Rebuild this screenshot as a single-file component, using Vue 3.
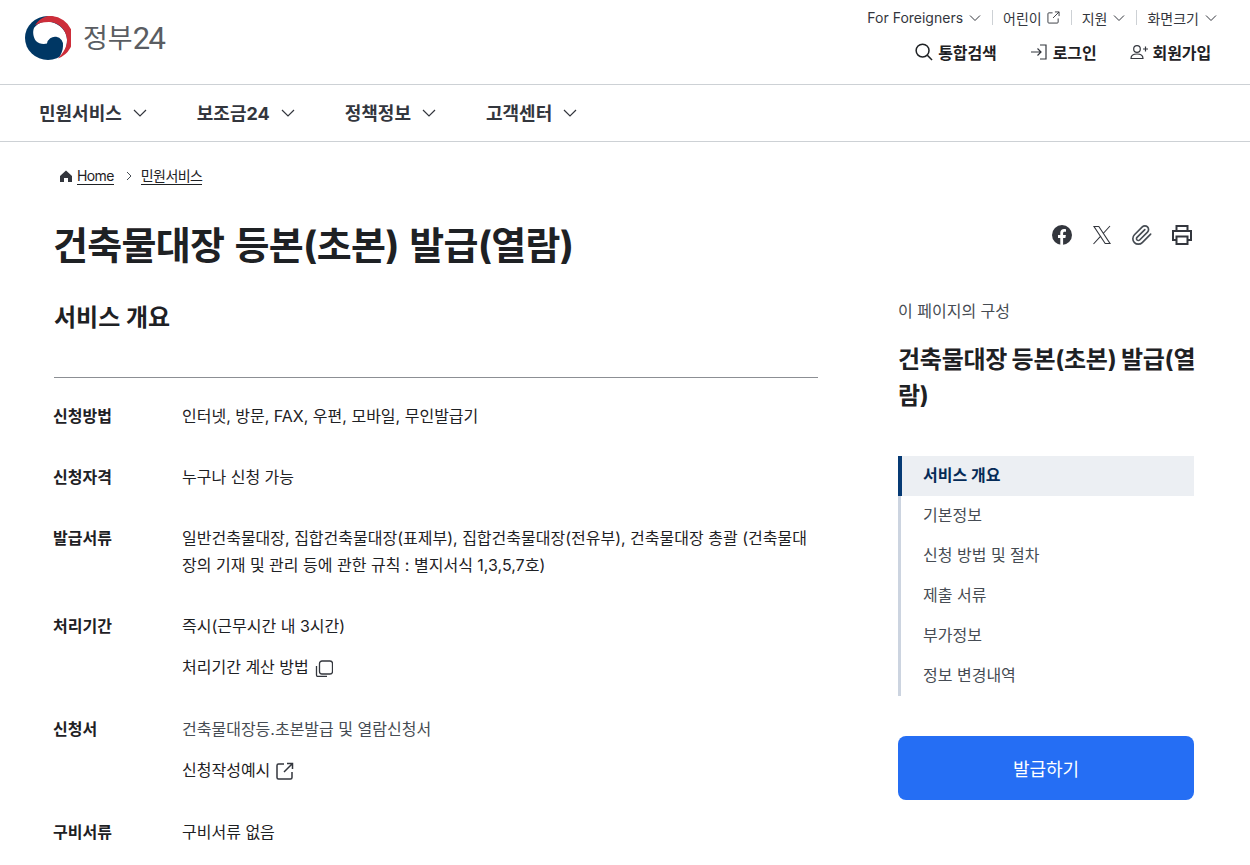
<script setup>
const rows = [
  { k: '신청방법', lines: ['인터넷, 방문, FAX, 우편, 모바일, 무인발급기'] },
  { k: '신청자격', lines: ['누구나 신청 가능'] },
  { k: '발급서류', lines: ['일반건축물대장, 집합건축물대장(표제부), 집합건축물대장(전유부), 건축물대장 총괄 (건축물대', '장의 기재 및 관리 등에 관한 규칙 : 별지서식 1,3,5,7호)'] },
]
const toc = ['기본정보', '신청 방법 및 절차', '제출 서류', '부가정보', '정보 변경내역']
const navs = ['민원서비스', '보조금24', '정책정보', '고객센터']
</script>

<template>
  <div class="page">
    <header class="top">
      <a class="logo">
        <svg width="46" height="44" viewBox="0 0 46 44">
          <ellipse cx="23" cy="22" rx="23" ry="22" fill="#003764"/>
          <path d="M9 12C13 6.500 19 5 26 6 35 8 42 15 42 24 42 33 38 39 33 43.500 36 39 38 34 38 30A8 8 0 0 0 22 27.500C18 28.500 13.500 27.500 11 25 8 21 7.500 15.500 9 12Z" fill="#fff"/>
          <path d="M10 9.500C13.500 4 18 1 23 0A23 22 0 0 1 33 42.500C39 36 42.500 30 42 23 41 13 33 6 24 6 18 6 13 7 10 9.500Z" fill="#cd2e3a"/>
        </svg>
        <span class="logotext"><span>정부</span><b>24</b></span>
      </a>
      <div class="util">
        <div class="util-top">
          <span class="ut">For Foreigners <svg class="chev s" viewBox="0 0 12 12"><path d="M1 3.500l5 5 5-5"/></svg></span>
          <i class="sep"></i>
          <span class="ut tight">어린이 <svg class="ext s2" viewBox="0 0 14 14"><path d="M6 2H2a1 1 0 0 0-1 1v9a1 1 0 0 0 1 1h9a1 1 0 0 0 1-1V8M8.500 1H13v4.500M13 1L6.500 7.500"/></svg></span>
          <i class="sep"></i>
          <span class="ut">지원 <svg class="chev s" viewBox="0 0 12 12"><path d="M1 3.500l5 5 5-5"/></svg></span>
          <i class="sep"></i>
          <span class="ut">화면크기 <svg class="chev s" viewBox="0 0 12 12"><path d="M1 3.500l5 5 5-5"/></svg></span>
        </div>
        <div class="util-bot">
          <span class="ub">
            <svg width="18" height="18" viewBox="0 0 19 19" fill="none" stroke="#1e2124" stroke-width="1.600"><circle cx="8" cy="8" r="6.800"/><path d="M13 13l5 5"/></svg>
            통합검색
          </span>
          <span class="ub">
            <svg width="18" height="18" viewBox="0 0 18 18" fill="none" stroke="#33363d" stroke-width="1.200"><path d="M1 9h10M7.500 5.500L11 9l-3.500 3.500M10 2h6v14h-6"/></svg>
            로그인
          </span>
          <span class="ub">
            <svg width="18" height="18" viewBox="0 0 18 18" fill="none" stroke="#33363d" stroke-width="1.200"><circle cx="7" cy="6" r="3.300"/><path d="M1 15.500c0-3 2.500-4.500 6-4.500s6 1.500 6 4.500zM13 6h5M15.500 3.500v5"/></svg>
            회원가입
          </span>
        </div>
      </div>
    </header>

    <nav class="gnb">
      <span v-for="n in navs" :key="n" class="gnb-item">{{ n }}
        <svg class="chev m" viewBox="0 0 14 14"><path d="M1 4l6 6 6-6"/></svg>
      </span>
    </nav>

    <div class="wrap">
      <div class="crumb">
        <svg width="14" height="14" viewBox="0 0 14 14"><path d="M7 1.500L1 7v6h4V9h4v4h4V7z" fill="#33363d"/></svg>
        <a class="cl">Home</a>
        <svg class="cr" width="8" height="10" viewBox="0 0 8 10" fill="none" stroke="#464c53" stroke-width="1"><path d="M2 1l4 4-4 4"/></svg>
        <a class="cl">민원서비스</a>
      </div>

      <div class="title-row">
        <h1>건축물대장 등본(초본) 발급(열람)</h1>
        <div class="share">
          <svg width="22" height="22" viewBox="0 0 22 22"><circle cx="11" cy="11" r="10" fill="#33363d"/><path d="M9.300 21v-7H7v-3h2.300V8.800c0-2.500 1.500-3.800 3.700-3.800.8 0 1.700.1 2 .2v2.500h-1.300c-1.200 0-1.600.7-1.600 1.500V11h2.800l-.5 3h-2.300v7z" fill="#fff"/></svg>
          <svg width="22" height="22" viewBox="0 0 22 22" fill="none" stroke="#33363d" stroke-width="1.100"><path d="M3 2.500h4.800L19 19.500h-4.800zM2.500 20l7.400-8.200M19 2l-6.800 7.500"/></svg>
          <svg width="22" height="22" viewBox="0 0 24 24" fill="none" stroke="#464c53" stroke-width="1.800" stroke-linecap="round" stroke-linejoin="round"><path d="M21.440 11.050l-9.190 9.190a6 6 0 0 1-8.490-8.490l8.570-8.570A4 4 0 1 1 18 8.840l-8.590 8.570a2 2 0 0 1-2.830-2.830l8.490-8.480"/></svg>
          <svg width="22" height="22" viewBox="0 0 22 22" fill="none" stroke="#33363d" stroke-width="2"><path d="M5.500 7V2h11v5M5.500 16H2V7h18v9h-3.500"/><path d="M5.500 12.500h11V20h-11z"/></svg>
        </div>
      </div>

      <div class="cols">
        <main class="main">
          <h2>서비스 개요</h2>
          <div class="tbl">
            <div v-for="r in rows" :key="r.k" class="row">
              <div class="k">{{ r.k }}</div>
              <div class="v"><p v-for="l in r.lines" :key="l">{{ l }}</p></div>
            </div>
            <div class="row">
              <div class="k">처리기간</div>
              <div class="v">
                <p>즉시(근무시간 내 3시간)</p>
                <p class="sub">처리기간 계산 방법
                  <svg class="ic" width="18" height="18" viewBox="0 0 18 18" fill="none" stroke="#33363d" stroke-width="1.300"><rect x="4.500" y="2" width="13" height="13" rx="2.500"/><path d="M1.500 7v9a1.500 1.500 0 0 0 1.500 1.500h9"/></svg>
                </p>
              </div>
            </div>
            <div class="row">
              <div class="k">신청서</div>
              <div class="v">
                <p class="muted">건축물대장등.초본발급 및 열람신청서</p>
                <p class="sub">신청작성예시
                  <svg class="ic" width="18" height="18" viewBox="0 0 18 18" fill="none" stroke="#33363d" stroke-width="1.500"><path d="M8 2H2.500A1.500 1.500 0 0 0 1 3.500v12A1.500 1.500 0 0 0 2.500 17h12a1.500 1.500 0 0 0 1.500-1.500V10M11 1.500h5.500V7M16.500 1.500L8 10"/></svg>
                </p>
              </div>
            </div>
            <div class="row">
              <div class="k">구비서류</div>
              <div class="v"><p>구비서류 없음</p></div>
            </div>
          </div>
        </main>

        <aside class="side">
          <div class="side-cap">이 페이지의 구성</div>
          <div class="side-title">건축물대장 등본(초본) 발급(열람)</div>
          <ul class="toc">
            <li class="on">서비스 개요</li>
            <li v-for="t in toc" :key="t">{{ t }}</li>
          </ul>
          <button class="cta">발급하기</button>
        </aside>
      </div>
    </div>
  </div>
</template>

<style>
html, body { margin: 0; background: #fff; overflow: hidden; }
</style>

<style scoped>
.page { width: 1250px; height: 865px; overflow: hidden; font-family: Inter, "Noto Sans CJK KR", sans-serif; color: #1e2124; }
.top { height: 84px; border-bottom: 1px solid #cdd1d5; display: flex; justify-content: space-between; padding: 0 38px 0 25px; }
.logo { display: flex; align-items: center; gap: 12px; height: 76px; }
.logotext { display: flex; align-items: center; color: #5a5d62; line-height: 1; }
.logotext span { font-size: 27px; }
.logotext b { font: 400 31px Roboto, sans-serif; letter-spacing: -1.500px; }
.util { display: flex; flex-direction: column; align-items: flex-end; }
.util-top { display: flex; align-items: center; height: 17px; margin: 9px -5px 0 0; font-size: 14px; color: #33363d; }
.ut { display: flex; align-items: center; gap: 6px; white-space: nowrap; }
.ut.tight { gap: 5px; }
.sep { width: 1px; height: 15px; background: #cdd1d5; margin: 0 10px 0 11px; }
.chev { fill: none; stroke: #33363d; stroke-width: 1; }
.chev.s { width: 12px; height: 12px; }
.chev.m { width: 14px; height: 14px; stroke-width: 1.200; margin-top: 2px; }
.ext { fill: none; stroke: #33363d; stroke-width: 1; }
.s2 { width: 13px; height: 13px; }
.util-bot { display: flex; gap: 33px; margin-top: 14px; margin-right: 1px; font-size: 16px; font-weight: 700; }
.ub { display: flex; align-items: center; gap: 5px; letter-spacing: -0.1px; white-space: nowrap; height: 24px; }
.gnb { height: 54px; padding: 0 0 2px 39px; border-bottom: 1px solid #cdd1d5; display: flex; align-items: center; gap: 50px; }
.gnb-item { display: flex; align-items: center; gap: 11px; font-size: 18px; font-weight: 700; color: #33363d; }
.wrap { padding: 0 56px 0 54px; }
.crumb { display: flex; align-items: center; height: 20px; margin: 24px 0 0 5px; font-size: 14px; color: #1e2124; letter-spacing: -0.6px; }
.cl { border-bottom: 1px solid #1e2124; line-height: 17px; margin-left: 4px; }
.cr { margin: 0 8px 0 11px; }
.cr + .cl { margin-left: 0; }
.title-row { display: flex; justify-content: space-between; align-items: flex-start; margin-top: 33px; }
h1 { margin: 0 0 0 -1px; font-size: 38px; font-weight: 700; line-height: 52px; letter-spacing: -0.7px; word-spacing: 2px; }
.share { display: flex; gap: 18px; margin: 5px 1px 0 0; }
.cols { display: flex; justify-content: space-between; margin-top: 29px; }
.main { width: 764px; }
h2 { margin: 0; font-size: 24px; font-weight: 700; line-height: 36px; height: 77px; border-bottom: 1px solid #8c8f94; }
.tbl { padding-top: 25px; display: flex; flex-direction: column; gap: 34px; }
.row { display: flex; font-size: 16px; line-height: 27px; }
.k { width: 129px; margin-left: -1px; font-weight: 700; flex: none; }
.v p { margin: 0; white-space: nowrap; }
.v .sub { margin: 14px 0 1px; display: flex; align-items: center; gap: 6px; }
.muted { color: #464c53; }
.side { width: 296px; }
.side-cap { font-size: 16px; color: #464c53; line-height: 24px; margin-top: -1px; }
.side-title { font-size: 24px; font-weight: 700; line-height: 36px; margin: 19px -6px 0 0; word-spacing: -1px; letter-spacing: -0.25px; }
.toc { list-style: none; margin: 42px 0 0; padding: 0; border-left: 3px solid #ccd4e0; }
.toc li { height: 40px; line-height: 38px; padding-left: 22px; font-size: 16px; color: #464c53; }
.toc li.on { background: #eceff3; font-weight: 700; color: #052b57; margin-left: -3px; border-left: 4px solid #063a74; padding-left: 21px; }
.cta { display: block; width: 296px; height: 64px; margin-top: 40px; border: 0; border-radius: 8px; background: #256ef4; color: #fff; font: 400 18px Inter, "Noto Sans CJK KR", sans-serif; }
</style>
